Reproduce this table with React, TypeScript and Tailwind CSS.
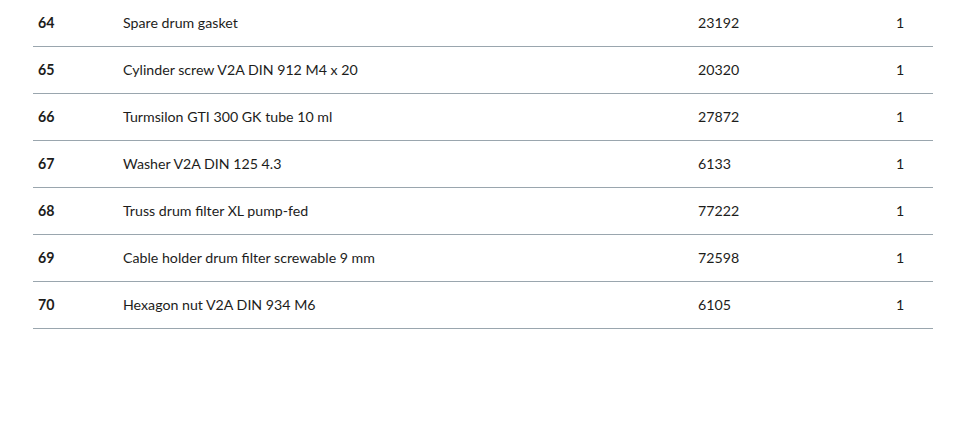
const rows = [
  ["64", "Spare drum gasket", "23192", "1"],
  ["65", "Cylinder screw V2A DIN 912 M4 x 20", "20320", "1"],
  ["66", "Turmsilon GTI 300 GK tube 10 ml", "27872", "1"],
  ["67", "Washer V2A DIN 125 4.3", "6133", "1"],
  ["68", "Truss drum filter XL pump-fed", "77222", "1"],
  ["69", "Cable holder drum filter screwable 9 mm", "72598", "1"],
  ["70", "Hexagon nut V2A DIN 934 M6", "6105", "1"],
];

export default function App() {
  return (
    <div className="w-[972px] h-[432px] bg-white pl-[33px] font-['Lato',sans-serif] text-[14.2px] text-[#1d1d1b]">
      <div className="w-[900px]">
        {rows.map(([pos, name, art, qty]) => (
          <div
            key={pos}
            className="grid grid-cols-[85px_575px_199px_41px] h-[47px] items-center pb-[1px] border-b border-[#9aa6ae]"
          >
            <span className="pl-[5px] font-bold">{pos}</span>
            <span className="pl-[5px]">{name}</span>
            <span className="pl-[5px]">{art}</span>
            <span className="pl-[4px]">{qty}</span>
          </div>
        ))}
      </div>
    </div>
  );
}
